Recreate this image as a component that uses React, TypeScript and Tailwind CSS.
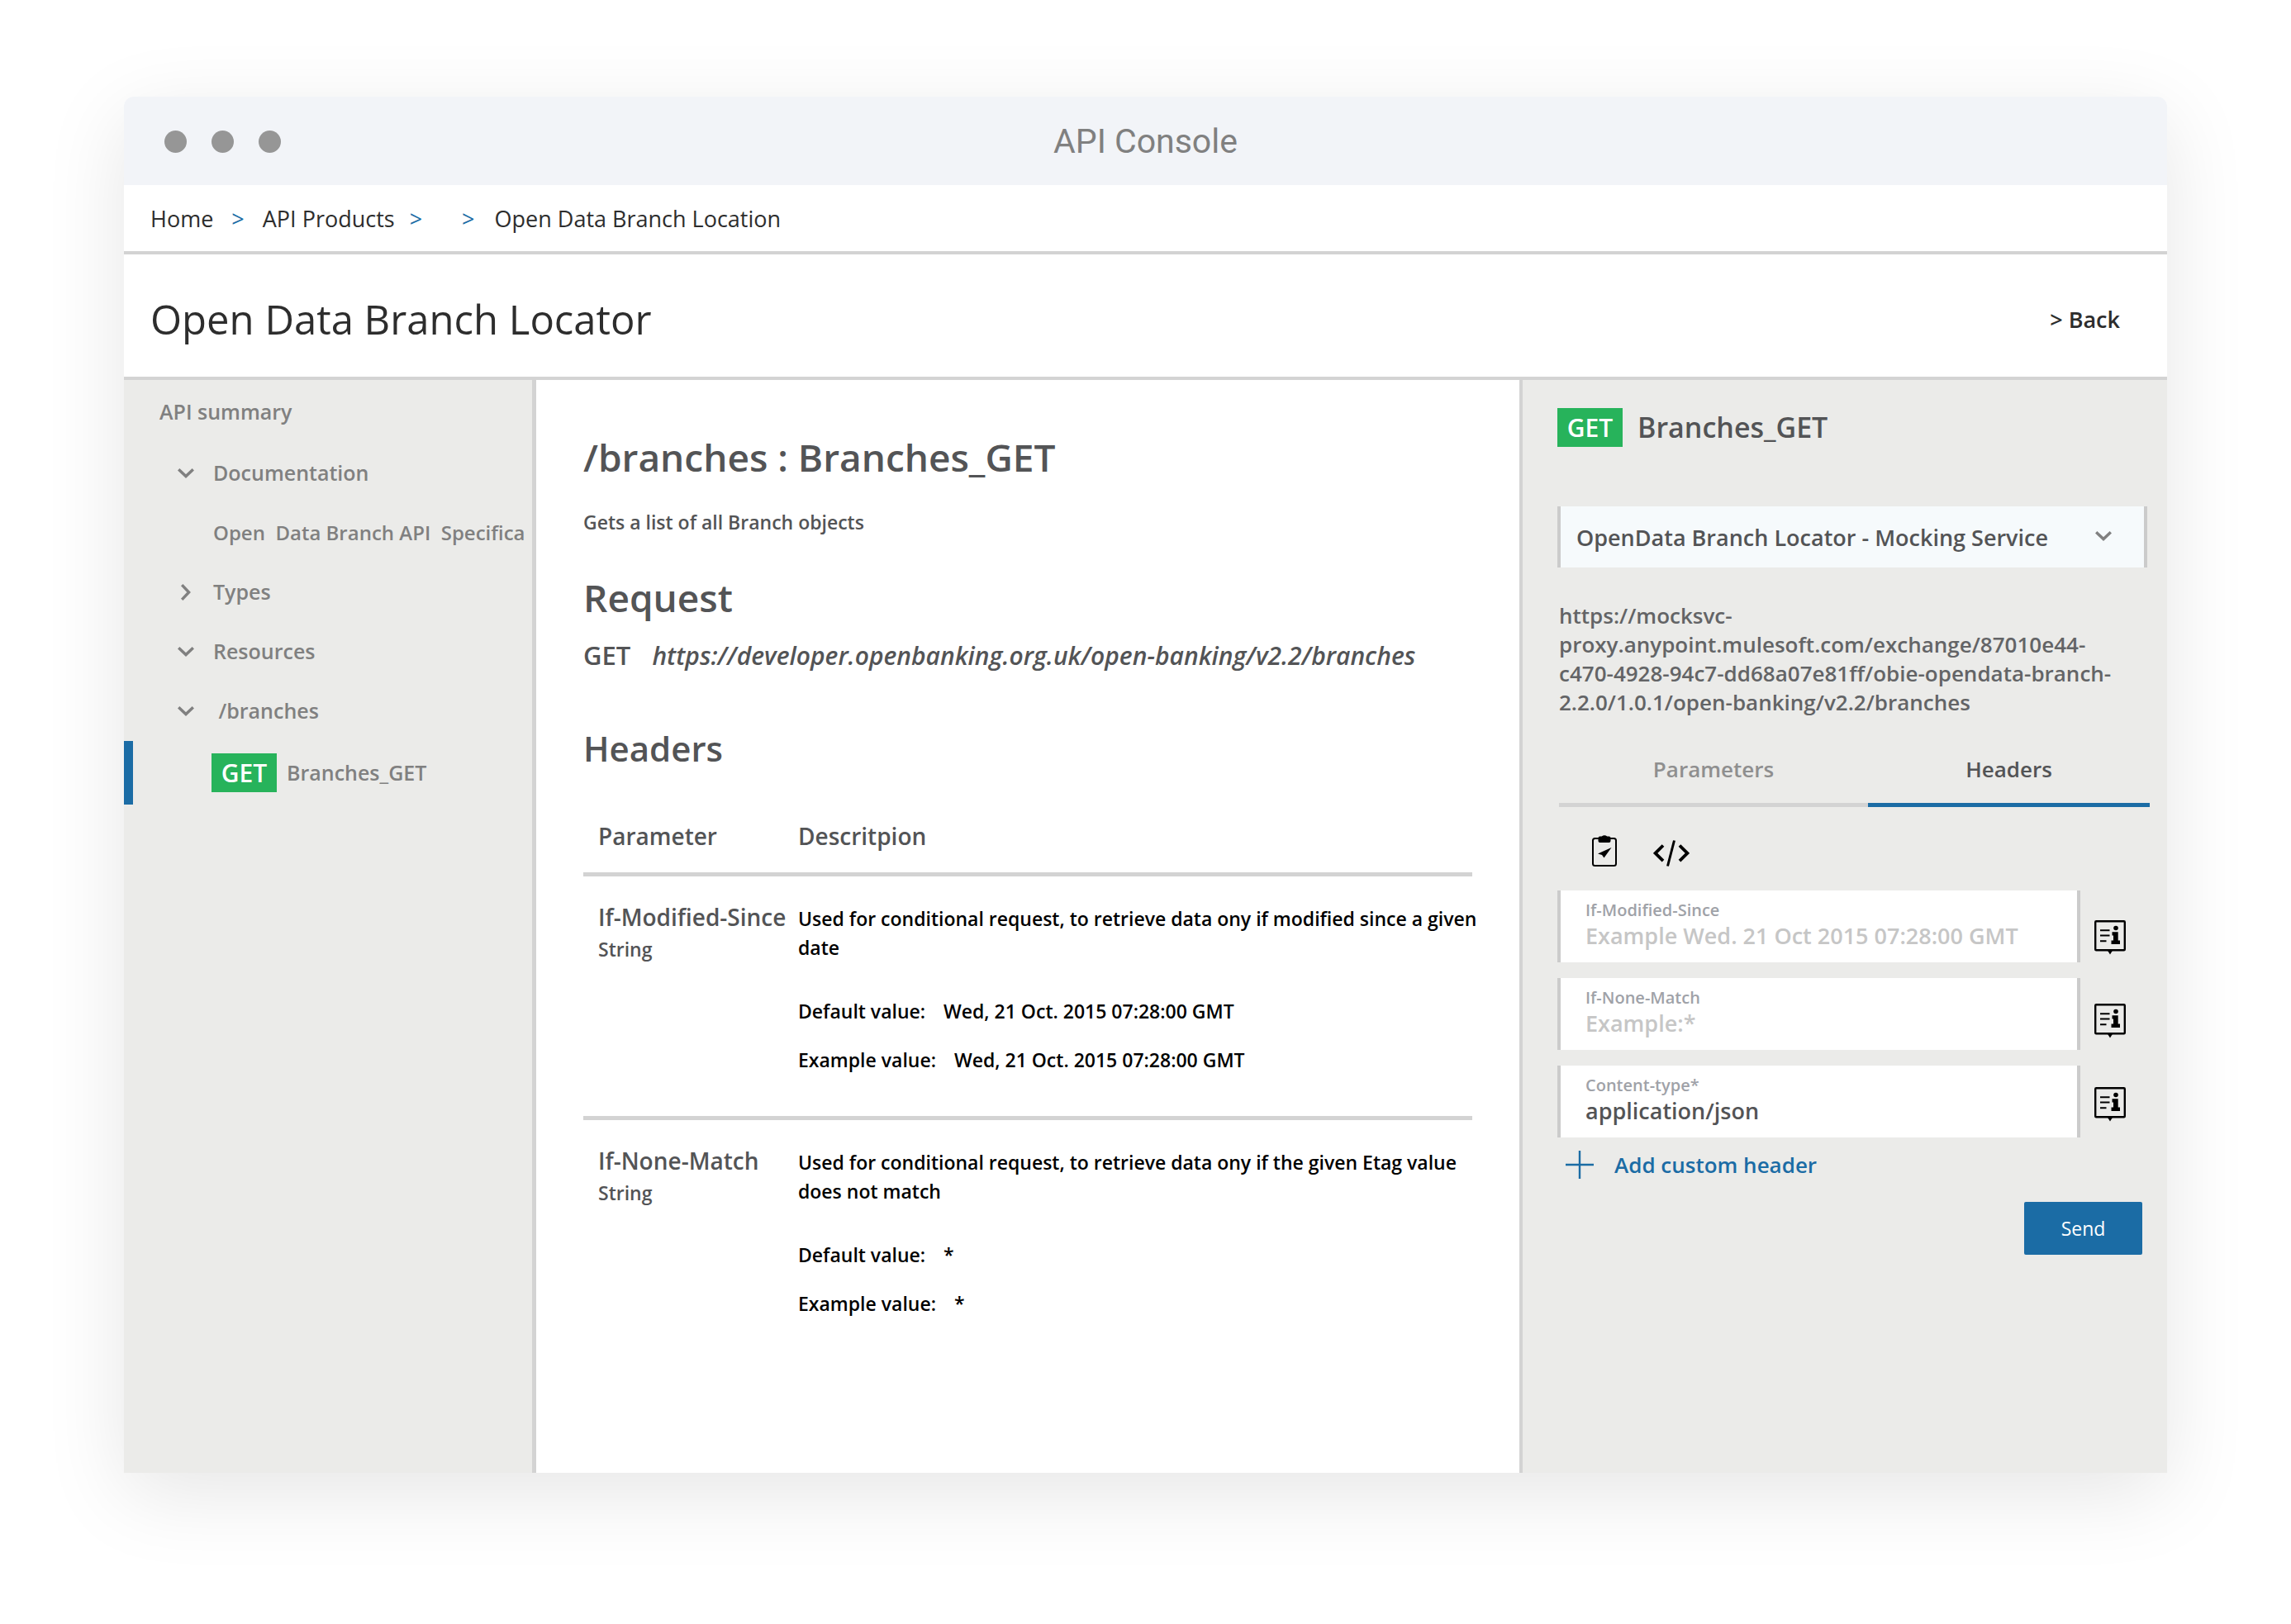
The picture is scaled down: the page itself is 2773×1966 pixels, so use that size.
import { useState } from 'react';

interface Param {
  name: string;
  type: string;
  description: string;
  value: string;
}

interface Field {
  id: string;
  label: string;
  placeholder: string;
  initial: string;
}

const PARAMS: Param[] = [
  {
    name: 'If-Modified-Since',
    type: 'String',
    description: 'Used for conditional request, to retrieve data ony if modified since a given date',
    value: 'Wed, 21 Oct. 2015 07:28:00 GMT',
  },
  {
    name: 'If-None-Match',
    type: 'String',
    description: 'Used for conditional request, to retrieve data ony if the given Etag value does not match',
    value: '*',
  },
];

const FIELDS: Field[] = [
  { id: 'if-modified-since', label: 'If-Modified-Since', placeholder: 'Example Wed. 21 Oct 2015 07:28:00 GMT', initial: '' },
  { id: 'if-none-match', label: 'If-None-Match', placeholder: 'Example:*', initial: '' },
  { id: 'content-type', label: 'Content-type*', placeholder: '', initial: 'application/json' },
];

function Chevron({ open = true }: { open?: boolean }) {
  return (
    <svg viewBox="0 0 20 20" className="w-5 h-5 shrink-0" fill="none" stroke="#808080" strokeWidth="3.4">
      <path d={open ? 'M1.2 5.2 10 13.6 18.8 5.2' : 'M5.2 1.2 13.6 10 5.2 18.8'} />
    </svg>
  );
}

function ClipboardIcon() {
  return (
    <svg viewBox="0 0 30 39" className="w-[30px] h-[39px]">
      <rect x="1" y="5" width="28" height="33" rx="2.5" fill="none" stroke="#000" strokeWidth="2" />
      <path d="M9.5 2.5h2.2a4.5 3 0 0 1 6.6 0h2.2a2 2 0 0 1 2 2V8a2 2 0 0 1-2 2h-11a2 2 0 0 1-2-2V4.5a2 2 0 0 1 2-2z" fill="#000" />
      <path d="M23.5 16 14.5 28.5l-2.5-3.5-5-1.5z" fill="#000" />
    </svg>
  );
}

function CodeIcon() {
  return (
    <svg viewBox="0 0 44 32" className="w-11 h-8" fill="none" stroke="#000" strokeWidth="3.8">
      <path d="M12 6.5 2.6 15.8 12 25.2M32 6.5l9.4 9.3L32 25.2" />
      <path d="M25.5 0.5 17.5 31.5" strokeWidth="3" />
    </svg>
  );
}

function InfoIcon() {
  return (
    <svg viewBox="0 0 38 42" className="w-[38px] h-[42px]">
      <rect x="1.2" y="1.2" width="35.6" height="35" rx="1" fill="none" stroke="#000" strokeWidth="2.4" />
      <path d="M15.5 36h7L19 41.5z" fill="#000" />
      <path d="M7 12.2h11.5M7 18.6h11.5M7 25.2h7.5" stroke="#000" strokeWidth="2" />
      <circle cx="26" cy="9.5" r="2.8" fill="#000" />
      <path d="M21.5 14.2h7.2v10.3h2.3v4.5h-10.5v-4.5h2.5v-6h-1.5z" fill="#000" />
    </svg>
  );
}

function MethodBadge() {
  return (
    <span className="flex items-center justify-center w-[79px] h-[47px] bg-[#27b35b] text-white text-[30px] font-semibold shrink-0">
      GET
    </span>
  );
}

function TreeItem({ label, open }: { label: string; open?: boolean }) {
  return (
    <li>
      <button className="flex items-center gap-[23px] h-[72px] pl-[65px] font-semibold whitespace-pre">
        <Chevron open={open} />
        {label}
      </button>
    </li>
  );
}

export default function App() {
  const [tab, setTab] = useState('Headers');
  const [values, setValues] = useState<Record<string, string>>({});

  return (
    <div className="min-h-screen flex flex-col px-[150px] pt-[117px] pb-[183px] bg-white font-['Open_Sans',sans-serif]">
      <div className="flex-1 flex flex-col rounded-t-[12px] overflow-hidden bg-white shadow-[0_25px_100px_rgba(0,0,0,0.1)]">
        <div className="grid grid-cols-3 items-center h-[107px] px-[49px] pt-[2px] bg-[#f2f4f8]">
          <div className="flex gap-[30px]">
            <span className="w-[27px] h-[27px] rounded-full bg-[#969696]" />
            <span className="w-[27px] h-[27px] rounded-full bg-[#969696]" />
            <span className="w-[27px] h-[27px] rounded-full bg-[#969696]" />
          </div>
          <div className="text-center text-[41px] text-[#808080] font-['Roboto',sans-serif]">API Console</div>
        </div>

        <nav className="flex items-center h-[84px] px-8 pt-[2px] border-b-4 border-[#d3d3d3] text-[27px] text-[#2d2d2d]">
          <a href="#home">Home</a>
          <span className="ml-[22px] text-[#1b6ca5]">&gt;</span>
          <a href="#products" className="ml-[22px]">API Products</a>
          <span className="ml-[18px] text-[#1b6ca5]">&gt;</span>
          <span className="ml-12 text-[#1b6ca5]">&gt;</span>
          <a href="#location" className="ml-6">Open Data Branch Location</a>
        </nav>

        <header className="flex items-center justify-between h-[152px] pl-8 pr-[57px] pt-[10px] border-b-4 border-[#d3d3d3] text-[#2d2d2d]">
          <h1 className="text-[49px]">Open Data Branch Locator</h1>
          <a href="#back" className="text-[27px] font-semibold">&gt; Back</a>
        </header>

        <div className="flex-1 flex">
          <aside className="w-[499px] shrink-0 overflow-hidden pt-px bg-[#ebebe9] border-r-[5px] border-[#d3d3d3] text-[25px] text-[#808080] font-semibold">
            <h2 className="flex items-center h-[76px] pl-[43px]">API summary</h2>
            <ul>
              <TreeItem label="Documentation" />
              <li>
                <a href="#spec" className="flex items-center h-[72px] pl-[108px] text-[24px] whitespace-pre">{'Open  Data Branch API  Specifica'}</a>
              </li>
              <TreeItem label="Types" open={false} />
              <TreeItem label="Resources" />
              <TreeItem label=" /branches" />
              <li>
                <a href="#branches-get" className="flex items-center gap-3 h-[77px] pl-[95px] border-l-[11px] border-[#1b6ca5]">
                  <MethodBadge />
                  Branches_GET
                </a>
              </li>
            </ul>
          </aside>

          <main className="flex-1 min-w-0 px-[57px] pt-[63px] text-[#535456] font-semibold">
            <h2 className="text-[46px] leading-[60px]">/branches : Branches_GET</h2>
            <p className="mt-[33px] text-[23px] leading-8">Gets a list of all Branch objects</p>
            <h2 className="mt-[45px] text-[46px] leading-[60px]">Request</h2>
            <p className="mt-5 text-[31px] leading-10">
              GET <em className="ml-[18px] text-[30px]">https://developer.openbanking.org.uk/open-banking/v2.2/branches</em>
            </p>
            <h2 className="mt-[62px] text-[42px] leading-[60px]">Headers</h2>

            <table className="w-full table-fixed text-left">
              <thead>
                <tr className="border-b-[5px] border-[#d3d3d3] text-[28px] leading-9">
                  <th className="w-[260px] pl-[18px] pt-[58px] pb-[26px] font-semibold">Parameter</th>
                  <th className="pt-[58px] pb-[26px] font-semibold">Descritpion</th>
                </tr>
              </thead>
              <tbody>
                {PARAMS.map((p) => (
                  <tr key={p.name} className="align-top border-b-[5px] border-[#d3d3d3] last:border-b-0 leading-[35px]">
                    <td className="pl-[18px] pt-8 whitespace-nowrap">
                      <div className="text-[28px]">{p.name}</div>
                      <div className="mt-1 text-[23px]">{p.type}</div>
                    </td>
                    <td className="pt-[34px] pb-[50px] text-[23px] text-black">
                      <p className="-mr-3">{p.description}</p>
                      <p className="mt-[42px]">Default value: <span className="ml-4">{p.value}</span></p>
                      <p className="mt-6">Example value: <span className="ml-4">{p.value}</span></p>
                    </td>
                  </tr>
                ))}
              </tbody>
            </table>
          </main>

          <section className="w-[784px] shrink-0 pl-[42px] pr-[21px] pt-[34px] bg-[#ebebe9] border-l-4 border-[#d3d3d3] text-[#535456] font-semibold">
            <div className="flex items-center gap-[18px]">
              <MethodBadge />
              <h2 className="text-[34px] leading-[47px]">Branches_GET</h2>
            </div>

            <div className="relative mt-[72px] mr-[3px]">
              <select
                aria-label="Service"
                className="appearance-none w-full h-[74px] pl-[19px] pr-20 pt-[2px] bg-[#f6fafc] border-x-4 border-[#cbcbcb] text-[27px] font-semibold outline-none"
              >
                <option>OpenData Branch Locator - Mocking Service</option>
              </select>
              <div className="absolute right-[43px] top-[26px] pointer-events-none">
                <Chevron />
              </div>
            </div>

            <p className="mt-[41px] pl-[2px] text-[26px] leading-[35px] text-[#636466] whitespace-nowrap">
              https://mocksvc-<br />
              proxy.anypoint.mulesoft.com/exchange/87010e44-<br />
              c470-4928-94c7-dd68a07e81ff/obie-opendata-branch-<br />
              2.2.0/1.0.1/open-banking/v2.2/branches
            </p>

            <div role="tablist" className="grid grid-cols-[374fr_341fr] mt-[45px] pl-[2px] text-[26px] leading-9">
              {['Parameters', 'Headers'].map((t) => (
                <button
                  key={t}
                  role="tab"
                  aria-selected={tab === t}
                  onClick={() => setTab(t)}
                  className={`pb-[23px] border-b-[5px] ${tab === t ? 'border-[#1b6ca5]' : 'border-[#d3d3d3] text-[#8f8f8f]'}`}
                >
                  {t}
                </button>
              ))}
            </div>

            <div className="flex items-end gap-11 mt-[33px] pl-[42px]">
              <button aria-label="Copy to clipboard"><ClipboardIcon /></button>
              <button aria-label="View source"><CodeIcon /></button>
            </div>

            <div className="flex gap-[17px] mt-[29px]">
              <div className="flex-1 flex flex-col gap-[19px]">
                {FIELDS.map((f) => (
                  <div key={f.id} className="h-[87px] pt-3 px-[30px] bg-white border-x-4 border-[#cbcbcb]">
                    <label htmlFor={f.id} className="block text-[20px] leading-6 text-[#9fa2a8]">{f.label}</label>
                    <input
                      id={f.id}
                      value={values[f.id] ?? f.initial}
                      placeholder={f.placeholder}
                      onChange={(e) => setValues((v) => ({ ...v, [f.id]: e.target.value }))}
                      className="block w-full h-[38px] text-[27px] placeholder:text-[#c6c6c6] outline-none"
                    />
                  </div>
                ))}
              </div>
              <div className="flex flex-col gap-[59px] pt-9 pr-[29px]">
                {FIELDS.map((f) => (
                  <button key={f.id} aria-label={`About ${f.label}`}><InfoIcon /></button>
                ))}
              </div>
            </div>

            <button className="flex items-center gap-[25px] h-[34px] mt-4 ml-[10px] text-[26px] text-[#1b6ca5]">
              <svg viewBox="0 0 34 34" className="w-[34px] h-[34px]" stroke="#1b6ca5" strokeWidth="2.4">
                <path d="M17 0v34M0 17h34" />
              </svg>
              Add custom header
            </button>

            <div className="flex justify-end mt-7 pr-[9px]">
              <button className="w-[143px] h-16 rounded-[2px] bg-[#1b6ca5] text-white text-[23px] font-normal">Send</button>
            </div>
          </section>
        </div>
      </div>
    </div>
  );
}
